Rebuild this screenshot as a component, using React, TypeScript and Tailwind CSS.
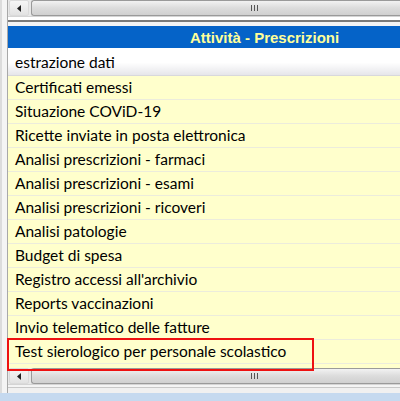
import React from "react";

const rows = [
  "Certificati emessi",
  "Situazione COViD-19",
  "Ricette inviate in posta elettronica",
  "Analisi prescrizioni - farmaci",
  "Analisi prescrizioni - esami",
  "Analisi prescrizioni - ricoveri",
  "Analisi patologie",
  "Budget di spesa",
  "Registro accessi all'archivio",
  "Reports vaccinazioni",
  "Invio telematico delle fatture",
  "Test sierologico per personale scolastico",
];

function ScrollBar() {
  return (
    <div className="flex h-[17px] items-stretch bg-[#e8e8e8] border-b border-[#d4d4d4]">
      <div className="flex w-[20px] items-center justify-center ml-[1px] bg-gradient-to-b from-[#f6f6f6] to-[#e2e2e2] border border-[#dadada] rounded-[2px]">
        <svg width="5" height="7" viewBox="0 0 5 7">
          <path d="M4 0 L0 3.5 L4 7 Z" fill="#202020" />
        </svg>
      </div>
      <div className="relative flex-1 ml-[2px] bg-gradient-to-b from-[#f2f2f2] via-[#dcdcdc] to-[#d0d0d0] border border-[#9a9a9a] rounded-l-[3px] border-r-0">
        <div className="absolute left-[219px] top-[4px] flex gap-[2px]">
          <div className="w-[1px] h-[6px] bg-[#555]" />
          <div className="w-[1px] h-[6px] bg-[#555]" />
          <div className="w-[1px] h-[6px] bg-[#555]" />
        </div>
      </div>
    </div>
  );
}

export default function App() {
  return (
    <div
      className="w-[400px] h-[401px] overflow-hidden flex flex-col bg-[#f0f0f0]"
      style={{ fontFamily: 'Lato, "Open Sans", sans-serif' }}
    >
      <div className="flex flex-1 min-h-0">
        <div className="w-[8px] flex">
          <div className="w-[2px] bg-[#dcdcdc]" />
          <div className="w-[5px] bg-[#f4f4f4]" />
          <div className="w-[1px] bg-[#a8a8a8]" />
        </div>
        <div className="flex-1 flex flex-col bg-white min-w-0">
          <ScrollBar />
          <div className="h-[3px] bg-white" />
          <div className="h-[2px] bg-[#7a7a7a]" />
          <div className="h-[4px] bg-[#f4f4f4]" />
          <div
            className="h-[22px] bg-[#0563c8] flex items-center pl-[182px] text-[#ffff99] font-bold text-[15px] leading-none"
            style={{ fontFamily: '"Liberation Sans", Arial, sans-serif' }}
          >
            Attività - Prescrizioni
          </div>
          <div className="h-[2px] bg-white" />
          <div className="h-[26px] flex items-center pl-[7px] text-[15.5px] text-black bg-gradient-to-b from-white via-white to-[#e6e6ea] border-b border-[#d8d8dc]">
            estrazione dati
          </div>
          {rows.map((r, i) => (
            <div
              key={r}
              className={
                "h-[24px] shrink-0 flex items-center pl-[7px] text-[15.5px] text-black bg-[#ffffcc] border-b border-[#ececdc] " +
                (i === rows.length - 1 ? "relative" : "")
              }
            >
              {r}
              {i === rows.length - 1 && (
                <div className="absolute left-[-1px] top-[-2px] w-[307px] h-[33px] border-2 border-[#ee1111] pointer-events-none z-10" />
              )}
            </div>
          ))}
          <div className="h-[4px] bg-[#ffffcc]" />
          <ScrollBar />
          <div className="h-[2px] bg-[#f4f4f4]" />
          <div className="h-[1px] bg-[#c8c8c8]" />
          <div className="flex-1 bg-[#f0f0f0]" />
        </div>
      </div>
      <div className="h-[8px] bg-[#c5d9ef]" />
    </div>
  );
}
